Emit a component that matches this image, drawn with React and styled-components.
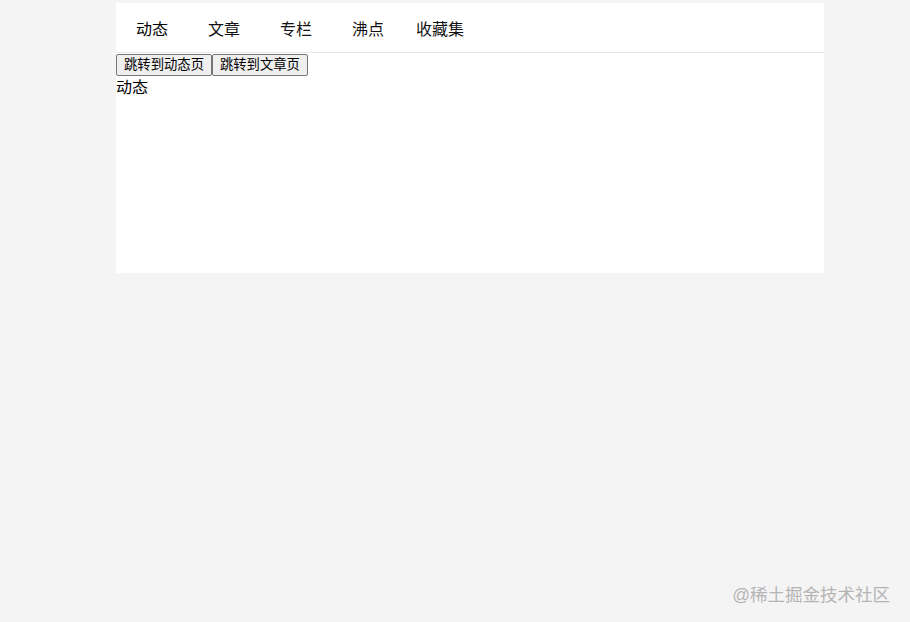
import React, { useState } from 'react'
import styled, { createGlobalStyle } from 'styled-components'

const Global = createGlobalStyle`
html, body {
  margin: 0;
  padding: 0;
  background: #f4f4f4;
  font-family: "Liberation Sans", "Noto Sans CJK SC", sans-serif;
}
`
const Page = styled.div`
position: relative;
width: 910px;
height: 622px;
padding-top: 3px;
box-sizing: border-box;
background: #f4f4f4;
`
const Card = styled.div`
margin-left: 116px;
width: 708px;
height: 270px;
background: #fff;
`
const Nav = styled.div`
display: flex;
height: 49px;
border-bottom: 1px solid #e6e6e6;
`
const Tab = styled.div`
width: 72px;
display: flex;
align-items: center;
justify-content: center;
font-size: 16px;
color: ${props => props.active ? '#000' : '#111'};
cursor: pointer;
`
const Buttons = styled.div`
display: flex;
padding-top: 1px;
`
const Btn = styled.button`
font-family: "Liberation Sans", "Noto Sans CJK SC", sans-serif;
font-size: 13.33px;
height: 22px;
padding: 0 7px;
margin: 0;
background: #efefef;
border: 1px solid #767676;
border-radius: 2px;
color: #000;
line-height: 18px;
`
const Content = styled.div`
font-size: 16px;
line-height: 20px;
padding-top: 2px;
color: #000;
`
const Watermark = styled.div`
position: absolute;
right: 20px;
bottom: 16px;
font-size: 17.5px;
color: #b4b4b4;
`

const tabs = ['动态', '文章', '专栏', '沸点', '收藏集']

const App = () => {
    const [page, setPage] = useState('动态')
    return (
        <Page>
            <Global />
            <Card>
                <Nav>
                    {tabs.map(t => <Tab key={t} active={t === page} onClick={() => setPage(t)}>{t}</Tab>)}
                </Nav>
                <Buttons>
                    <Btn onClick={() => setPage('动态')}>跳转到动态页</Btn>
                    <Btn onClick={() => setPage('文章')}>跳转到文章页</Btn>
                </Buttons>
                <Content>{page}</Content>
            </Card>
            <Watermark>@稀土掘金技术社区</Watermark>
        </Page>
    )
}

export default App
